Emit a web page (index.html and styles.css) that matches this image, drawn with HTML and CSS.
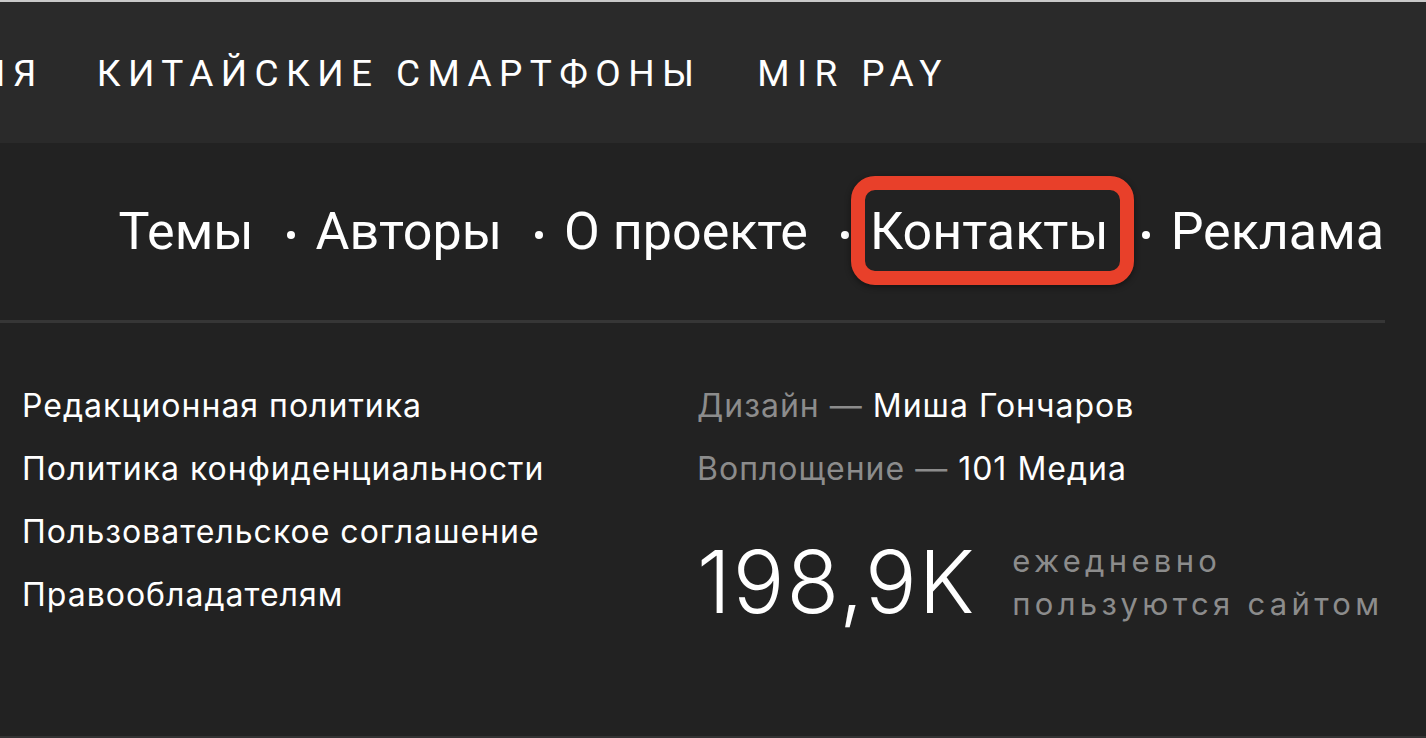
FILE: index.html
```html
<!DOCTYPE html>
<html lang="ru">
<head>
<meta charset="utf-8">
<title>Footer</title>
<link rel="stylesheet" href="styles.css">
</head>
<body>
<div class="page">
  <header class="topbar">
    <nav class="cats">
      <a class="cat cat-cut" href="#">ИЯ</a>
      <a class="cat" href="#">КИТАЙСКИЕ СМАРТФОНЫ</a>
      <a class="cat" href="#">MIR PAY</a>
    </nav>
  </header>
  <footer class="footer">
    <nav class="menu">
      <a class="menu-item" href="#"><span class="label">Темы</span></a>
      <a class="menu-item" href="#"><span class="label">Авторы</span></a>
      <a class="menu-item" href="#"><span class="label">О проекте</span></a>
      <a class="menu-item" href="#"><span class="label highlight">Контакты</span></a>
      <a class="menu-item" href="#"><span class="label">Реклама</span></a>
    </nav>
    <div class="divider"></div>
    <div class="info">
      <ul class="links">
        <li><a href="#">Редакционная политика</a></li>
        <li><a href="#">Политика конфиденциальности</a></li>
        <li><a href="#">Пользовательское соглашение</a></li>
        <li><a href="#">Правообладателям</a></li>
      </ul>
      <div class="credits">
        <p class="credit"><span class="muted">Дизайн —</span> Миша Гончаров</p>
        <p class="credit"><span class="muted">Воплощение —</span> 101 Медиа</p>
        <div class="stat">
          <span class="stat-num">198,9K</span>
          <span class="stat-label">ежедневно<br>пользуются сайтом</span>
        </div>
      </div>
    </div>
  </footer>
</div>
</body>
</html>
```

FILE: styles.css
```css
html, body {
  margin: 0;
  padding: 0;
  background: #222222;
  height: 100%;
}

body {
  font-family: Roboto, "Liberation Sans", sans-serif;
  color: #ffffff;
  overflow: hidden;
}

a {
  color: inherit;
  text-decoration: none;
}

.page {
  position: relative;
  height: 738px;
  box-sizing: border-box;
  border-bottom: 2px solid #333333;
}

.topbar {
  height: 143px;
  box-sizing: border-box;
  background: #2a2a2a;
  border-top: 2px solid #c9c9c9;
  display: flex;
  align-items: center;
  overflow: hidden;
}

.cats {
  display: flex;
  align-items: center;
  gap: 56px;
  white-space: nowrap;
  padding-top: 2px;
}

.cat {
  font-size: 37px;
  letter-spacing: 7.4px;
  font-weight: 400;
}

.cat-cut {
  margin-left: -21px;
}

.cat-cut + .cat {
  margin-left: -3px;
}

.footer {
  display: flex;
  flex-direction: column;
}

.menu {
  height: 177px;
  display: flex;
  align-items: center;
  justify-content: flex-end;
  padding-right: 42px;
  box-sizing: border-box;
}

.menu-item {
  font-size: 52px;
  line-height: 1;
  display: flex;
  align-items: center;
}

.menu-item + .menu-item::before {
  content: "";
  width: 8px;
  height: 8px;
  border-radius: 50%;
  background: #ffffff;
  margin-left: 33px;
  margin-right: 21px;
  margin-top: 6px;
}

.label {
  position: relative;
}

.highlight::after {
  content: "";
  position: absolute;
  left: -19px;
  right: -25px;
  top: -30px;
  bottom: -27px;
  border: 14px solid #e8402a;
  border-radius: 24px;
  box-shadow: 0 2px 6px rgba(0, 0, 0, 0.45);
  pointer-events: none;
}

.divider {
  width: 1385px;
  height: 3px;
  background: #363636;
}

.info {
  display: grid;
  grid-template-columns: 675px 1fr;
  padding-left: 22px;
  padding-top: 51px;
  font-family: Inter, Roboto, "Liberation Sans", sans-serif;
}

.links {
  list-style: none;
  margin: 0;
  padding: 0;
}

.links li,
.credit {
  font-size: 32px;
  line-height: 63px;
  letter-spacing: 1px;
  margin: 0;
  white-space: nowrap;
}

.muted {
  color: #8c8c8c;
}

.stat {
  display: flex;
  align-items: center;
  gap: 36px;
  margin-top: 39px;
}

.stat-num {
  font-size: 86px;
  font-weight: 300;
  line-height: 1;
  letter-spacing: 2px;
}

.stat-label {
  font-size: 31px;
  line-height: 43px;
  letter-spacing: 4.3px;
  color: #8c8c8c;
  white-space: nowrap;
}
```
